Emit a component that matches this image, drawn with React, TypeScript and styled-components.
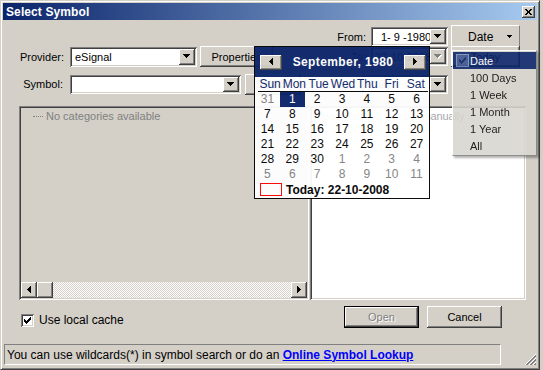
import React from 'react';
import styled, { createGlobalStyle, css } from 'styled-components';

const GlobalStyle = createGlobalStyle`
  html, body {
    margin: 0;
    padding: 0;
    background: #d4d0c8;
  }
  body {
    width: 543px;
    height: 370px;
    overflow: hidden;
    font-family: "Liberation Sans", Arial, sans-serif;
    font-size: 11px;
    color: #000;
  }
`;

const raised = css`
  box-shadow: inset -1px -1px #404040, inset 1px 1px #fff, inset -2px -2px #808080, inset 2px 2px #d4d0c8;
`;

const sunken = css`
  box-shadow: inset 1px 1px #808080, inset -1px -1px #fff, inset 2px 2px #404040, inset -2px -2px #d4d0c8;
`;

type Dir = 'down' | 'left' | 'right' | 'small';

const arrowPaths: Record<Dir, { w: number; h: number; d: string }> = {
  down: { w: 7, h: 4, d: 'M0 0h7v1H0zM1 1h5v1H1zM2 2h3v1H2zM3 3h1v1H3z' },
  small: { w: 5, h: 3, d: 'M0 0h5v1H0zM1 1h3v1H1zM2 2h1v1H2z' },
  left: { w: 4, h: 7, d: 'M3 0h1v7H3zM2 1h1v5H2zM1 2h1v3H1zM0 3h1v1H0z' },
  right: { w: 4, h: 7, d: 'M0 0h1v7H0zM1 1h1v5H1zM2 2h1v3H2zM3 3h1v1H3z' },
};

const Arrow: React.FC<{ dir: Dir; disabled?: boolean }> = ({ dir, disabled }) => {
  const a = arrowPaths[dir];
  return (
    <svg width={a.w + 1} height={a.h + 1} shapeRendering="crispEdges" style={{ display: 'block' }}>
      {disabled && <path d={a.d} fill="#fff" transform="translate(1 1)" />}
      <path d={a.d} fill={disabled ? '#808080' : '#000'} />
    </svg>
  );
};

/* window frame */

const Window = styled.div`
  position: relative;
  width: 540px;
  height: 370px;
  box-sizing: border-box;
  padding: 2px;
  background: #d4d0c8;
  border: 1px solid;
  border-color: #d4d0c8 #404040 #404040 #d4d0c8;
  box-shadow: inset 1px 1px #fff, inset -1px -1px #808080;
  display: flex;
  flex-direction: column;
`;

const TitleBar = styled.div`
  height: 17px;
  display: flex;
  align-items: center;
  justify-content: space-between;
  padding: 0 2px 0 3px;
  background: linear-gradient(to right, #0a246a, #a6caf0);
`;

const TitleText = styled.span`
  color: #fff;
  font-weight: bold;
  font-size: 12px;
  letter-spacing: 0.1px;
`;

const CloseBox = styled.span`
  width: 13px;
  height: 12px;
  box-sizing: border-box;
  background: #d4d0c8;
  ${raised};
  display: flex;
  align-items: center;
  justify-content: center;
`;

/* rows */

const TopRow = styled.div`
  height: 23px;
  margin-top: 5px;
  padding-right: 17px;
  display: flex;
  align-items: center;
  justify-content: flex-end;
`;

const FieldRow = styled.div<{ $top: number; $h: number }>`
  height: ${p => p.$h}px;
  margin-top: ${p => p.$top}px;
  padding: 0 17px;
  display: flex;
  align-items: center;
`;

const Spacer = styled.div<{ $w?: number }>`
  flex: ${p => (p.$w ? `0 0 ${p.$w}px` : '1')};
`;

const Label = styled.span<{ $w?: number }>`
  width: ${p => (p.$w ? `${p.$w}px` : 'auto')};
  text-align: right;
  margin-right: ${p => (p.$w ? 7 : 5)}px;
  white-space: nowrap;
`;

const Combo = styled.div<{ $w: number; $h: number; $ml?: number }>`
  width: ${p => p.$w}px;
  height: ${p => p.$h}px;
  margin-left: ${p => p.$ml ?? 0}px;
  box-sizing: border-box;
  padding: 2px;
  background: #fff;
  ${sunken};
  display: flex;
  align-items: stretch;
`;

const ComboText = styled.span<{ $pl?: number }>`
  flex: 1;
  min-width: 0;
  overflow: hidden;
  padding-left: ${p => p.$pl ?? 3}px;
  display: flex;
  align-items: center;
  white-space: nowrap;
`;

const ComboButton = styled.span`
  width: 16px;
  box-sizing: border-box;
  background: #d4d0c8;
  ${raised};
  display: flex;
  align-items: center;
  justify-content: center;
`;

const Button = styled.div<{ $w: number; $h: number; $ml?: number; $default?: boolean; $disabled?: boolean }>`
  width: ${p => p.$w}px;
  height: ${p => p.$h}px;
  margin-left: ${p => p.$ml ?? 0}px;
  box-sizing: border-box;
  background: #d4d0c8;
  display: flex;
  align-items: center;
  justify-content: center;
  white-space: nowrap;
  ${raised};
  ${p =>
    p.$default &&
    css`
      border: 1px solid #000;
    `}
  ${p =>
    p.$disabled &&
    css`
      color: #808080;
      text-shadow: 1px 1px #fff;
    `}
`;

const DropButton = styled.div`
  width: 69px;
  height: 23px;
  margin-left: 3px;
  box-sizing: border-box;
  border: 1px solid;
  border-color: #fff #808080 #808080 #fff;
  display: flex;
  align-items: center;
  padding: 0 6px 0 16px;
`;

const DropLabel = styled.span`
  flex: 1;
  font-size: 12px;
`;

/* panels */

const Panels = styled.div`
  height: 194px;
  margin-top: 12px;
  padding-left: 16px;
  display: flex;
  gap: 1px;
`;

const TreePanel = styled.div`
  width: 290px;
  box-sizing: border-box;
  padding: 2px;
  background: #d4d0c8;
  ${sunken};
  display: flex;
  flex-direction: column;
`;

const TreeBody = styled.div`
  flex: 1;
  padding: 1px 0 0 12px;
  line-height: 14px;
  color: #808080;
  display: flex;
  align-items: flex-start;
`;

const DotLine = styled.span`
  width: 10px;
  margin: 7px 3px 0 0;
  border-top: 1px dotted #808080;
`;

const HScroll = styled.div`
  height: 16px;
  display: flex;
`;

const ScrollBtn = styled.span`
  width: 16px;
  height: 16px;
  box-sizing: border-box;
  background: #d4d0c8;
  ${raised};
  display: flex;
  align-items: center;
  justify-content: center;
`;

const ScrollTrack = styled.span`
  flex: 1;
  background-color: #fff;
  background-image: repeating-conic-gradient(#d4d0c8 0 25%, #fff 0 50%);
  background-size: 2px 2px;
`;

const ListPanel = styled.div`
  width: 216px;
  box-sizing: border-box;
  padding: 3px 3px;
  background: #fff;
  ${sunken};
  color: #a8a8a8;
  line-height: 14px;
  letter-spacing: -0.15px;
  white-space: nowrap;
`;

/* bottom */

const BottomRow = styled.div`
  height: 23px;
  margin-top: 6px;
  padding: 0 35px 0 18px;
  display: flex;
  align-items: flex-start;
`;

const CheckWrap = styled.label`
  margin-top: 7px;
  display: flex;
  align-items: center;
  gap: 5px;
`;

const CheckBox = styled.span`
  width: 13px;
  height: 13px;
  box-sizing: border-box;
  background: #fff;
  ${sunken};
  display: flex;
  align-items: center;
  justify-content: center;
`;

const CheckLabel = styled.span`
  font-size: 12px;
`;

const StatusRow = styled.div`
  margin-top: 15px;
  display: flex;
  align-items: flex-end;
  justify-content: space-between;
  padding: 0 0 0 1px;
`;

const StatusPanel = styled.div`
  width: 497px;
  height: 21px;
  box-sizing: border-box;
  border: 1px solid;
  border-color: #808080 #fff #fff #808080;
  padding-left: 2px;
  display: flex;
  align-items: center;
  font-size: 12px;
  white-space: pre;
`;

const Link = styled.a`
  color: #0000ff;
  font-weight: bold;
  text-decoration: underline;
`;

const Grip = styled.svg`
  display: block;
  margin-bottom: -1px;
`;

/* calendar popup */

const Calendar = styled.div`
  position: absolute;
  left: 253px;
  top: 45px;
  width: 176px;
  height: 153px;
  box-sizing: border-box;
  border: 1px solid #000;
  background: #fff;
  opacity: 0.95;
  font-size: 12px;
`;

const CalHeader = styled.div`
  height: 30px;
  background: #0a246a;
  display: flex;
  align-items: center;
  padding: 0 3px 0 5px;
`;

const CalNav = styled.span`
  width: 22px;
  height: 15px;
  box-sizing: border-box;
  background: #d4d0c8;
  ${raised};
  display: flex;
  align-items: center;
  justify-content: center;
`;

const CalTitle = styled.span`
  flex: 1;
  text-align: center;
  color: #fff;
  font-weight: bold;
  font-size: 12px;
  letter-spacing: 0.4px;
`;

const CalGrid = styled.div`
  display: grid;
  grid-template-columns: repeat(7, 1fr);
`;

const DayNames = styled(CalGrid)`
  height: 14px;
  line-height: 14px;
  color: #0a246a;
  margin: 0 1px 0 3px;
  border-bottom: 1px solid #000;
`;

const DayName = styled.span`
  text-align: center;
`;

const DayCell = styled.span<{ $muted?: boolean; $selected?: boolean }>`
  height: 15px;
  line-height: 15px;
  text-align: center;
  color: ${p => (p.$selected ? '#fff' : p.$muted ? '#808080' : '#000')};
  background: ${p => (p.$selected ? '#0a246a' : 'transparent')};
`;

const TodayRow = styled.div`
  height: 15px;
  display: flex;
  align-items: center;
  padding-left: 5px;
  gap: 4px;
`;

const TodayMark = styled.span`
  width: 22px;
  height: 13px;
  box-sizing: border-box;
  border: 1px solid #ff0000;
`;

const TodayText = styled.span`
  font-weight: bold;
`;

/* range menu */

const Menu = styled.div`
  position: absolute;
  left: 451px;
  top: 49px;
  width: 85px;
  box-sizing: border-box;
  padding: 1px 0;
  background: #d8d5ce;
  border: 1px solid;
  border-color: #fff #808080 #808080 #fff;
  box-shadow: 2px 2px 2px rgba(0, 0, 0, 0.35);
  opacity: 0.88;
`;

const MenuItem = styled.div<{ $active?: boolean }>`
  height: 17px;
  display: flex;
  align-items: center;
  padding-left: 17px;
  position: relative;
  color: ${p => (p.$active ? '#fff' : '#000')};
  background: ${p => (p.$active ? '#0a246a' : 'transparent')};
`;

const MenuCheck = styled.span`
  position: absolute;
  left: 3px;
  top: 2px;
  width: 13px;
  height: 13px;
  box-sizing: border-box;
  border: 1px solid #7d8fbf;
  background: #3b548f;
  display: flex;
  align-items: center;
  justify-content: center;
`;

const CheckMark: React.FC<{ color: string }> = ({ color }) => (
  <svg width="7" height="7" shapeRendering="crispEdges" style={{ display: 'block' }}>
    <path d="M6 0h1v3H6zM5 1h1v3H5zM4 2h1v3H4zM3 3h1v3H3zM2 4h1v3H2zM1 3h1v3H1zM0 2h1v3H0z" fill={color} />
  </svg>
);

const calendarDays = Array.from({ length: 42 }, (_, i) => {
  if (i === 0) return { n: 31, muted: true };
  if (i <= 30) return { n: i, muted: false };
  return { n: i - 30, muted: true };
});

const ranges = ['Date', '100 Days', '1 Week', '1 Month', '1 Year', 'All'];

export default function App() {
  return (
    <>
      <GlobalStyle />
      <Window>
        <TitleBar>
          <TitleText>Select Symbol</TitleText>
          <CloseBox>
            <svg width="7" height="6" shapeRendering="crispEdges" style={{ display: 'block' }}>
              <path d="M0 0h2v1H0zM5 0h2v1H5zM1 1h2v1H1zM4 1h2v1H4zM2 2h3v2H2zM1 4h2v1H1zM4 4h2v1H4zM0 5h2v1H0zM5 5h2v1H5z" fill="#000" />
            </svg>
          </CloseBox>
        </TitleBar>

        <TopRow>
          <Label>From:</Label>
          <Combo $w={77} $h={19}>
            <ComboText $pl={8}>1- 9 -1980</ComboText>
            <ComboButton>
              <Arrow dir="down" />
            </ComboButton>
          </Combo>
          <DropButton>
            <DropLabel>Date</DropLabel>
            <Arrow dir="small" />
          </DropButton>
        </TopRow>

        <FieldRow $top={-2} $h={21}>
          <Label $w={43}>Provider:</Label>
          <Combo $w={127} $h={20}>
            <ComboText>eSignal</ComboText>
            <ComboButton>
              <Arrow dir="down" />
            </ComboButton>
          </Combo>
          <Button $w={73} $h={21} $ml={3}>
            Properties
          </Button>
          <Spacer />
          <Label>To:</Label>
          <Combo $w={77} $h={19}>
            <ComboText $pl={2}>22-10-2008</ComboText>
            <ComboButton>
              <Arrow dir="down" disabled />
            </ComboButton>
          </Combo>
          <Button $w={69} $h={21} $ml={3}>
            Today
          </Button>
        </FieldRow>

        <FieldRow $top={7} $h={20}>
          <Label $w={43}>Symbol:</Label>
          <Combo $w={171} $h={19}>
            <ComboText />
            <ComboButton>
              <Arrow dir="down" />
            </ComboButton>
          </Combo>
          <Button $w={56} $h={21} $ml={4}>
            Search
          </Button>
          <Spacer />
          <Combo $w={86} $h={19}>
            <ComboText>Daily</ComboText>
            <ComboButton>
              <Arrow dir="down" />
            </ComboButton>
          </Combo>
          <Spacer $w={72} />
        </FieldRow>

        <Panels>
          <TreePanel>
            <TreeBody>
              <DotLine />
              No categories available
            </TreeBody>
            <HScroll>
              <ScrollBtn>
                <Arrow dir="left" />
              </ScrollBtn>
              <ScrollBtn />
              <ScrollTrack />
              <ScrollBtn>
                <Arrow dir="right" />
              </ScrollBtn>
            </HScroll>
          </TreePanel>
          <ListPanel>Please enter a symbol manually</ListPanel>
        </Panels>

        <BottomRow>
          <CheckWrap>
            <CheckBox>
              <CheckMark color="#000" />
            </CheckBox>
            <CheckLabel>Use local cache</CheckLabel>
          </CheckWrap>
          <Spacer />
          <Button $w={75} $h={22} $default $disabled>
            Open
          </Button>
          <Button $w={75} $h={22} $ml={8}>
            Cancel
          </Button>
        </BottomRow>

        <StatusRow>
          <StatusPanel>
            You can use wildcards(*) in symbol search or do an <Link>Online Symbol Lookup</Link>
          </StatusPanel>
          <Grip width="13" height="13" viewBox="0 0 13 13" shapeRendering="crispEdges">
            <path d="M12 1L1 12M12 5L5 12M12 9L9 12" stroke="#fff" strokeWidth="1" />
            <path d="M12 2L2 12M12 3L3 12M12 6L6 12M12 7L7 12M12 10L10 12M12 11L11 12" stroke="#808080" strokeWidth="1" />
          </Grip>
        </StatusRow>

        <Calendar>
          <CalHeader>
            <CalNav>
              <Arrow dir="left" />
            </CalNav>
            <CalTitle>September, 1980</CalTitle>
            <CalNav>
              <Arrow dir="right" />
            </CalNav>
          </CalHeader>
          <DayNames>
            {['Sun', 'Mon', 'Tue', 'Wed', 'Thu', 'Fri', 'Sat'].map(d => (
              <DayName key={d}>{d}</DayName>
            ))}
          </DayNames>
          <CalGrid>
            {calendarDays.map((d, i) => (
              <DayCell key={i} $muted={d.muted} $selected={i === 1}>
                {d.n}
              </DayCell>
            ))}
          </CalGrid>
          <TodayRow>
            <TodayMark />
            <TodayText>Today: 22-10-2008</TodayText>
          </TodayRow>
        </Calendar>

        <Menu>
          {ranges.map((r, i) => (
            <MenuItem key={r} $active={i === 0}>
              {i === 0 && (
                <MenuCheck>
                  <CheckMark color="#0a246a" />
                </MenuCheck>
              )}
              {r}
            </MenuItem>
          ))}
        </Menu>
      </Window>
    </>
  );
}
